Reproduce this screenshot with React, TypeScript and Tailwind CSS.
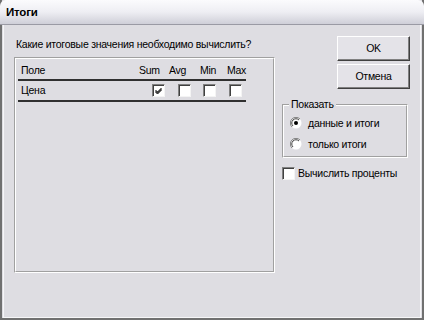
import React from "react";

const Check = ({ checked }: { checked?: boolean }) => (
  <div className="relative shrink-0 w-[13px] h-[13px] bg-white border border-t-[#808080] border-l-[#808080] border-r-[#f4f4f4] border-b-[#f4f4f4] shadow-[inset_1px_1px_0_#404040]">
    {checked && (
      <svg className="absolute left-[1px] top-[1px]" width="10" height="10" viewBox="0 0 10 10">
        <path d="M1.5 4 L3.5 6 L7.5 2 M1.5 5 L3.5 7 L7.5 3 M1.5 6 L3.5 8 L7.5 4" stroke="#000" strokeWidth="1" fill="none" />
      </svg>
    )}
  </div>
);

const Radio = ({ checked }: { checked?: boolean }) => (
  <svg className="shrink-0" width="12" height="12" viewBox="0 0 12 12">
    <circle cx="6" cy="6" r="5.5" fill="#fff" />
    <path d="M10 2 A5.5 5.5 0 0 0 2 10" stroke="#808080" fill="none" />
    <path d="M9 3 A4 4 0 0 0 3 9" stroke="#404040" fill="none" />
    {checked && <circle cx="6" cy="6" r="2" fill="#000" />}
  </svg>
);

const Btn = ({ children }: { children: React.ReactNode }) => (
  <div className="w-[73px] h-[25px] flex items-center justify-center bg-[#e4e3e8] border border-t-[#ffffff] border-l-[#ffffff] border-r-[#404040] border-b-[#404040] shadow-[inset_-1px_-1px_0_#808080]">
    {children}
  </div>
);

export default function App() {
  return (
    <div
      className="w-[424px] h-[320px] bg-[#deddE2] flex flex-col text-[10.5px] tracking-[-0.25px] text-black border-2 border-[#707070] border-t-0 whitespace-nowrap"
      style={{ fontFamily: "Tahoma, 'Liberation Sans', Arial, sans-serif" }}
    >
      <div className="h-[25px] shrink-0 flex items-center bg-gradient-to-b from-[#fbfbfd] via-[#eeeef3] to-[#cfcfd8] font-bold text-[11.5px] tracking-[-0.2px] border-b border-[#9a9aa4] rounded-t-[6px] -mx-[2px] px-[6px] pt-[2px]">
        Итоги
      </div>
      <div className="flex-1 flex border-x border-b border-[#f6f6f8] mx-[1px]">
        <div className="w-[272px] shrink-0 flex flex-col pl-[10px] pt-[12px]">
          <div className="h-[14px] leading-[14px] pl-[2px]">Какие итоговые значения необходимо вычислить?</div>
          <div className="mt-[6px] w-[261px] h-[216px] border border-t-[#a0a0a0] border-l-[#a0a0a0] border-r-[#ffffff] border-b-[#ffffff]">
            <div className="w-full h-full border border-t-[#ffffff] border-l-[#ffffff] border-r-[#a0a0a0] border-b-[#a0a0a0] pl-[2px] pt-[3px]">
              <div className="w-[228px]">
                <div className="flex items-end h-[17px] pl-[3px] pb-[3px] leading-[12px]">
                  <div className="w-[118px]">Поле</div>
                  <div className="w-[30px]">Sum</div>
                  <div className="w-[31px]">Avg</div>
                  <div className="w-[27px]">Min</div>
                  <div>Max</div>
                </div>
                <div className="h-[2px] bg-[#303030]" />
                <div className="flex items-center h-[19px] pl-[3px]">
                  <div className="w-[131px]">Цена</div>
                  <Check checked />
                  <div className="ml-[13px]"><Check /></div>
                  <div className="ml-[12px]"><Check /></div>
                  <div className="ml-[13px]"><Check /></div>
                </div>
                <div className="h-[2px] bg-[#303030]" />
              </div>
            </div>
          </div>
        </div>
        <div className="flex flex-col pl-[6px] pt-[11px] flex-1">
          <div className="flex flex-col gap-[3px] pl-[55px]">
            <Btn>OK</Btn>
            <Btn>Отмена</Btn>
          </div>
          <div className="relative mt-[15px] w-[126px] h-[54px] border border-t-[#a0a0a0] border-l-[#a0a0a0] border-r-[#ffffff] border-b-[#ffffff]">
            <div className="w-full h-full border border-t-[#ffffff] border-l-[#ffffff] border-r-[#a0a0a0] border-b-[#a0a0a0] pl-[6px] pt-[11px] flex flex-col gap-[9px]">
              <div className="flex items-center h-[12px] leading-[12px] gap-[6px]"><Radio checked /><span>данные и итоги</span></div>
              <div className="flex items-center h-[12px] leading-[12px] gap-[6px]"><Radio /><span>только итоги</span></div>
            </div>
            <div className="absolute left-[6px] -top-[7px] bg-[#deddE2] px-[2px] leading-[13px]">Показать</div>
          </div>
          <div className="mt-[9px] flex items-center h-[13px] leading-[13px] gap-[3px]">
            <Check />
            <span>Вычислить проценты</span>
          </div>
        </div>
      </div>
    </div>
  );
}
